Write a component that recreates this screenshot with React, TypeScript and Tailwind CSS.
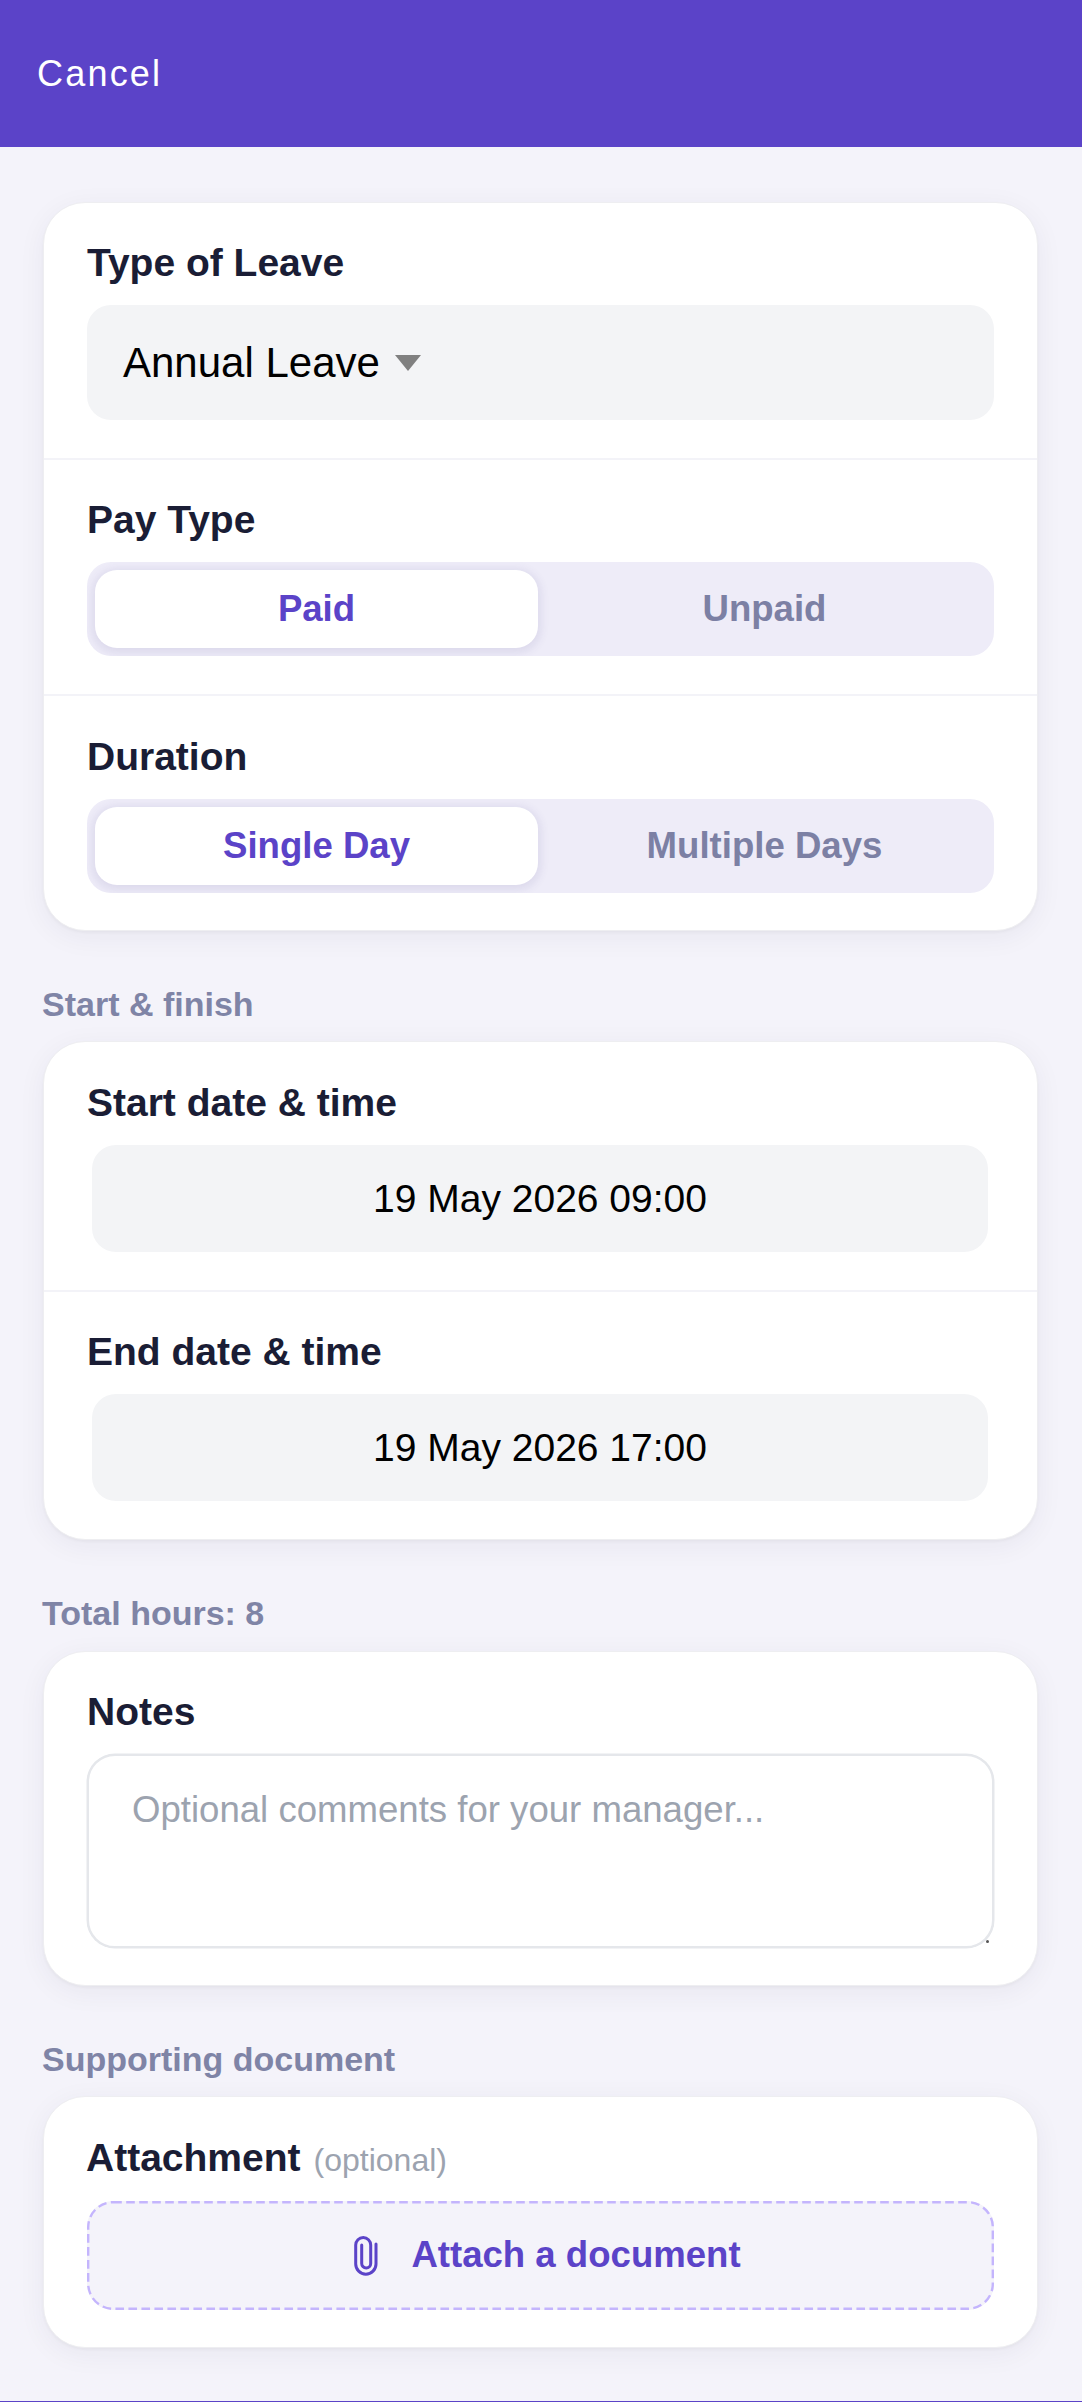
import React from "react";

function Label({ children }: { children: React.ReactNode }) {
  return <div className="h-[44px] leading-[44px] text-[39px] font-bold text-[#1a1d35] pl-[43px]">{children}</div>;
}

function Section({ children }: { children: React.ReactNode }) {
  return <div className="h-[40px] leading-[40px] text-[34px] font-bold text-[#7f84a6] pl-[42px]">{children}</div>;
}

function Divider() {
  return <div className="h-[2px] bg-[#f3f3f8]" />;
}

function Card({ children, className }: { children: React.ReactNode; className: string }) {
  return (
    <div className={`ml-[43px] mr-[44px] rounded-[42px] bg-white border border-[#eeeef1] shadow-[0_2px_3px_rgba(0,0,0,0.035),0_6px_28px_rgba(30,30,70,0.055)] ${className}`}>
      {children}
    </div>
  );
}

function Segment({ on, off }: { on: string; off: string }) {
  return (
    <div className="mt-[20px] mx-[43px] h-[94px] rounded-[24px] bg-[#eeecf8] pl-[8px] py-[8px] flex overflow-hidden">
      <div className="w-[443px] rounded-[22px] bg-white flex items-center justify-center text-[36.6px] font-bold text-[#5b43c8] shadow-[0_2px_8px_3px_rgba(70,60,140,0.10)]">
        {on}
      </div>
      <div className="flex-1 pr-[3px] flex items-center justify-center text-[36.6px] font-bold text-[#7c80a4]">{off}</div>
    </div>
  );
}

function DateBox({ value }: { value: string }) {
  return (
    <div className="mt-[20px] ml-[48px] mr-[49px] h-[107px] pt-[2px] rounded-[24px] bg-[#f3f4f6] flex items-center justify-center text-[39px] text-black">
      {value}
    </div>
  );
}

export default function App() {
  return (
    <div className="h-[2402px] overflow-hidden bg-[#5b43c8] font-['Liberation_Sans',Arial,sans-serif]">
      <div className="h-[2401px] bg-[#f4f3fa]">
        <header className="h-[147px] bg-[#5b43c8] flex items-center pl-[37px]">
          <span className="text-[36px] tracking-[2.2px] text-white">Cancel</span>
        </header>

        <Card className="mt-[55px]">
          <div className="pt-[38px] pb-[38px]">
            <Label>Type of Leave</Label>
            <div className="mt-[20px] mx-[43px] h-[115px] rounded-[24px] bg-[#f3f4f6] flex items-center pl-[36px]">
              <span className="text-[42px] text-black">Annual Leave</span>
              <svg className="ml-[15px]" width="26" height="16" viewBox="0 0 26 16">
                <polygon points="0,0 26,0 13,16" fill="#808080" />
              </svg>
            </div>
          </div>
          <Divider />
          <div className="pt-[38px] pb-[38px]">
            <Label>Pay Type</Label>
            <Segment on="Paid" off="Unpaid" />
          </div>
          <Divider />
          <div className="pt-[39px] pb-[37px]">
            <Label>Duration</Label>
            <Segment on="Single Day" off="Multiple Days" />
          </div>
        </Card>

        <div className="mt-[53px]"><Section>Start &amp; finish</Section></div>
        <Card className="mt-[17px]">
          <div className="pt-[39px] pb-[38px]">
            <Label>Start date &amp; time</Label>
            <DateBox value="19 May 2026 09:00" />
          </div>
          <Divider />
          <div className="pt-[38px] pb-[38px]">
            <Label>End date &amp; time</Label>
            <DateBox value="19 May 2026 17:00" />
          </div>
        </Card>

        <div className="mt-[53px]"><Section>Total hours: 8</Section></div>
        <Card className="mt-[18px]">
          <div className="pt-[38px] pb-[37px]">
            <Label>Notes</Label>
            <div className="relative mt-[20px] mx-[43px] flex">
              <textarea
                readOnly
                placeholder="Optional comments for your manager..."
                className="w-full h-[194px] resize-none rounded-[28px] bg-white border-[2px] border-[#e5e7eb] shadow-[0_0_0_0.5px_#e5e7eb] pl-[43px] pr-[42px] pt-[33px] text-[36.6px] leading-[42px] placeholder:text-[#9ca3af] outline-none"
              />
              <div className="absolute right-[5px] bottom-[5px] h-[3px] w-[3px] rounded-full bg-[#555]" />
            </div>
          </div>
        </Card>

        <div className="mt-[53px]"><Section>Supporting document</Section></div>
        <Card className="mt-[17px]">
          <div className="pt-[39px] pb-[37px]">
            <div className="h-[44px] leading-[44px] pl-[42px] flex items-baseline">
              <span className="text-[39px] font-bold text-[#1a1d35]">Attachment</span>
              <span className="ml-[13px] text-[32px] text-[#9ca3af]">(optional)</span>
            </div>
            <div className="relative mt-[21px] mx-[43px] h-[109px] rounded-[26px] bg-[#f4f3fa] flex items-center justify-center pl-[14px]">
              <svg className="absolute inset-0" width="907" height="109" viewBox="0 0 907 109" fill="none">
                <rect x="1.2" y="1.2" width="904.6" height="106.6" rx="25" stroke="#c4b5fd" strokeWidth="2.4" strokeDasharray="8.6 4.4" />
              </svg>
              <svg width="24" height="40" viewBox="0 0 24 40" fill="none" stroke="#5b43c8" strokeWidth="3" strokeLinecap="round">
                <path d="M22 8V28A10.15 10.15 0 0 1 1.7 28V9A7.5 7.5 0 0 1 16.7 9V27.5A4.5 4.5 0 0 1 7.7 27.5V9" />
              </svg>
              <span className="ml-[33px] text-[36.6px] font-bold text-[#5b43c8]">Attach a document</span>
            </div>
          </div>
        </Card>
      </div>
    </div>
  );
}
